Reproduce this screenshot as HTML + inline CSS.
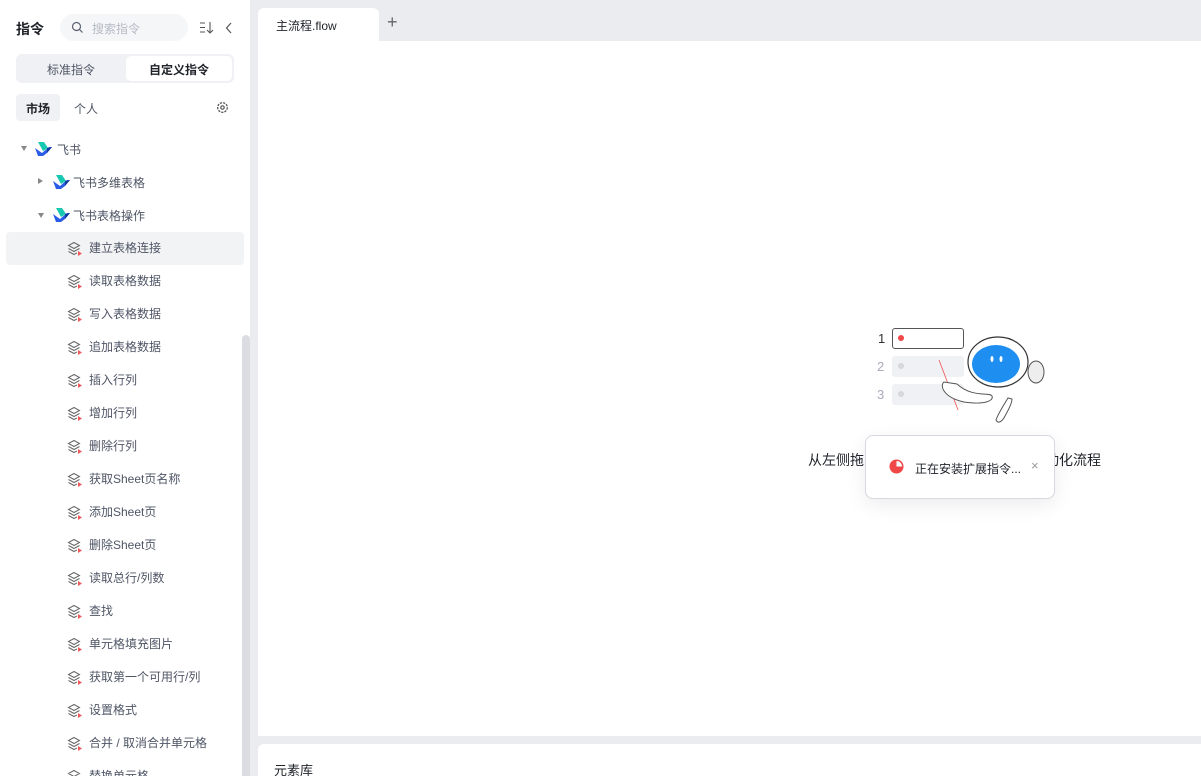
<!DOCTYPE html>
<html><head><meta charset="utf-8"><style>
*{margin:0;padding:0;box-sizing:border-box}
html,body{width:1201px;height:776px;overflow:hidden}
body{background:#ebecf0;font-family:"Liberation Sans","Noto Sans CJK SC",sans-serif;position:relative;color:#1f2329}
.side{position:absolute;left:0;top:0;width:250px;height:776px;background:#fff;overflow:hidden}
.abs{position:absolute}
.item{position:absolute;left:0;width:244px;height:33px;font-size:12px;color:#4e5565;line-height:33px}
.item span{position:absolute;left:89px}
.item svg{position:absolute;left:67px;top:9px}
</style></head><body>
<div class="side">
 <div class="abs" style="left:16px;top:19px;font-size:14px;font-weight:bold">指令</div>
 <div class="abs" style="left:60px;top:14px;width:128px;height:27px;border-radius:14px;background:#f5f6f8"></div>
 <svg class="abs" style="left:71px;top:21px" width="13" height="13" viewBox="0 0 13 13"><circle cx="5.5" cy="5.5" r="4" fill="none" stroke="#5a6070" stroke-width="1.2"/><path d="M8.5 8.5l3 3" stroke="#5a6070" stroke-width="1.2"/></svg>
 <div class="abs" style="left:92px;top:20px;font-size:12px;color:#b5bac5">搜索指令</div>
 <svg class="abs" style="left:200px;top:22px" width="14" height="12" viewBox="0 0 14 12"><path d="M0 1h5M0 5.5h5M0 10h5M10 0v11M7 8l3 3 3-3" fill="none" stroke="#555" stroke-width="1.1"/></svg>
 <svg class="abs" style="left:225px;top:22px" width="8" height="12" viewBox="0 0 8 12"><path d="M6 1L1.5 6 6 11" fill="none" stroke="#555" stroke-width="1.2"/></svg>
 <div class="abs" style="left:16px;top:54px;width:218px;height:29px;border-radius:6px;background:#f0f1f4"></div>
 <div class="abs" style="left:126px;top:56px;width:106px;height:25px;border-radius:5px;background:#fff"></div>
 <div class="abs" style="left:47px;top:61px;font-size:12px;color:#4e5565">标准指令</div>
 <div class="abs" style="left:149px;top:61px;font-size:12px;font-weight:bold">自定义指令</div>
 <div class="abs" style="left:16px;top:94px;width:44px;height:27px;border-radius:4px;background:#f0f1f4"></div>
 <div class="abs" style="left:26px;top:100px;font-size:12px;font-weight:bold">市场</div>
 <div class="abs" style="left:74px;top:100px;font-size:12px;color:#4e5565">个人</div>
 <svg class="abs" style="left:216px;top:101px" width="13" height="13" viewBox="0 0 13 13"><circle cx="6.5" cy="6.5" r="4.8" fill="none" stroke="#555" stroke-width="1.3" stroke-dasharray="2.2 1.1"/><circle cx="6.5" cy="6.5" r="1.7" fill="none" stroke="#555" stroke-width="1.2"/></svg>
 <div class="abs" style="left:21px;top:146px;border-left:3.5px solid transparent;border-right:3.5px solid transparent;border-top:5px solid #888"></div>
 <svg class="abs" style="left:35px;top:142px" width="17" height="15" viewBox="0 0 17 15"><path d="M3 0h6l4 6-5 3z" fill="#19c8b0"/><path d="M0 6l7 5 7-6 3 0-5 6-4 3H3z" fill="#2b5ce6"/><path d="M12 6l5-1-5 6z" fill="#123a9c"/></svg>
 <div class="abs" style="left:57px;top:141px;font-size:12px;color:#4e5565">飞书</div>
 <div class="abs" style="left:38px;top:178px;border-top:3.5px solid transparent;border-bottom:3.5px solid transparent;border-left:5px solid #888"></div>
 <svg class="abs" style="left:53px;top:175px" width="17" height="15" viewBox="0 0 17 15"><path d="M3 0h6l4 6-5 3z" fill="#19c8b0"/><path d="M0 6l7 5 7-6 3 0-5 6-4 3H3z" fill="#2b5ce6"/><path d="M12 6l5-1-5 6z" fill="#123a9c"/></svg>
 <div class="abs" style="left:73px;top:174px;font-size:12px;color:#4e5565">飞书多维表格</div>
 <div class="abs" style="left:38px;top:213px;border-left:3.5px solid transparent;border-right:3.5px solid transparent;border-top:5px solid #888"></div>
 <svg class="abs" style="left:53px;top:208px" width="17" height="15" viewBox="0 0 17 15"><path d="M3 0h6l4 6-5 3z" fill="#19c8b0"/><path d="M0 6l7 5 7-6 3 0-5 6-4 3H3z" fill="#2b5ce6"/><path d="M12 6l5-1-5 6z" fill="#123a9c"/></svg>
 <div class="abs" style="left:73px;top:207px;font-size:12px;color:#4e5565">飞书表格操作</div>
 <div class="abs" style="left:6px;top:232px;width:238px;height:33px;border-radius:4px;background:#f2f3f5"></div>
 <div id="items"></div>
 <div class="abs" style="left:242px;top:335px;width:8px;height:441px;background:#dcdde2;border-radius:4px 4px 0 0"></div>
</div>
<div class="abs" style="left:258px;top:8px;width:121px;height:33px;background:#fff;border-radius:6px 6px 0 0"></div>
<div class="abs" style="left:276px;top:17px;font-size:12px">主流程.flow</div>
<div class="abs" style="left:387px;top:12px;font-size:18px;color:#666;font-weight:300">+</div>
<div class="abs" style="left:258px;top:41px;width:943px;height:695px;background:#fff"></div>
<div class="abs" style="left:258px;top:744px;width:943px;height:32px;background:#fff;border-radius:6px 0 0 0;overflow:hidden"><div class="abs" style="left:16px;top:16px;font-size:13px">元素库</div></div>
<div class="abs" style="left:878px;top:331px;font-size:13px;color:#333">1</div>
<div class="abs" style="left:877px;top:359px;font-size:13px;color:#aab">2</div>
<div class="abs" style="left:877px;top:387px;font-size:13px;color:#aab">3</div>
<div class="abs" style="left:892px;top:328px;width:72px;height:21px;border:1px solid #555;border-radius:3px"></div>
<div class="abs" style="left:898px;top:335px;width:6px;height:6px;border-radius:50%;background:#f04848"></div>
<div class="abs" style="left:892px;top:356px;width:72px;height:21px;background:#f0f1f4;border-radius:3px"></div>
<div class="abs" style="left:892px;top:384px;width:72px;height:21px;background:#f0f1f4;border-radius:3px"></div>
<div class="abs" style="left:898px;top:363px;width:6px;height:6px;border-radius:50%;background:#d5d7dc"></div>
<div class="abs" style="left:898px;top:391px;width:6px;height:6px;border-radius:50%;background:#d5d7dc"></div>
<svg class="abs" style="left:936px;top:330px" width="115" height="100" viewBox="0 0 115 100"><ellipse cx="62" cy="32" rx="30" ry="25" fill="#fff" stroke="#333" stroke-width="1.2"/><ellipse cx="60" cy="34" rx="24" ry="19" fill="#1e8ff0"/><ellipse cx="56" cy="29" rx="1.5" ry="3" fill="#fff"/><ellipse cx="65" cy="29" rx="1.5" ry="3" fill="#fff"/><ellipse cx="100" cy="42" rx="8" ry="11" fill="#eee" stroke="#555"/><path d="M3 30 L22 80" stroke="#f05050" stroke-width="0.8"/><path d="M8 52c-4 3-2 15 20 20 20 3 30-1 28-6-2-4-20 2-35-12z" fill="#fff" stroke="#555"/><path d="M72 68c-5 8-10 16-12 22 2 4 6 2 9-4 4-7 7-14 7-17z" fill="#fff" stroke="#555"/></svg>
<div class="abs" style="left:808px;top:450px;font-size:14px">从左侧拖</div>
<div class="abs" style="left:1045px;top:450px;font-size:14px">动化流程</div>
<div class="abs" style="left:865px;top:435px;width:190px;height:64px;background:#fff;border:1px solid #d6d9e0;border-radius:8px;box-shadow:0 6px 20px rgba(0,0,0,.08)"></div>
<svg class="abs" style="left:889px;top:459px" width="15" height="15" viewBox="0 0 15 15"><circle cx="7.5" cy="7.5" r="7" fill="#f04848"/><path d="M7.5 7.5V2A5.5 5.5 0 0 1 13 7.5z" fill="#fff"/></svg>
<div class="abs" style="left:915px;top:460px;font-size:12px">正在安装扩展指令...</div>
<div class="abs" style="left:1031px;top:458px;font-size:13px;color:#999">×</div>
<script>
var n=["建立表格连接","读取表格数据","写入表格数据","追加表格数据","插入行列","增加行列","删除行列","获取Sheet页名称","添加Sheet页","删除Sheet页","读取总行/列数","查找","单元格填充图片","获取第一个可用行/列","设置格式","合并 / 取消合并单元格","替换单元格"];
var h="";n.forEach(function(t,i){h+='<div class="item" style="top:'+(232+i*33)+'px"><svg width="16" height="16" viewBox="0 0 16 16"><path d="M7 1.5L1.5 4.5 7 7.5l5.5-3zM1.5 7.5L7 10.5l5.5-3M1.5 10.5L7 13.5l3-1.6" fill="none" stroke="#666" stroke-width="1"/><path d="M11 10l4 2.5-4 2.5z" fill="#f05a5a"/></svg><span>'+t+'</span></div>'});
document.getElementById("items").innerHTML=h;
</script>
</body></html>
